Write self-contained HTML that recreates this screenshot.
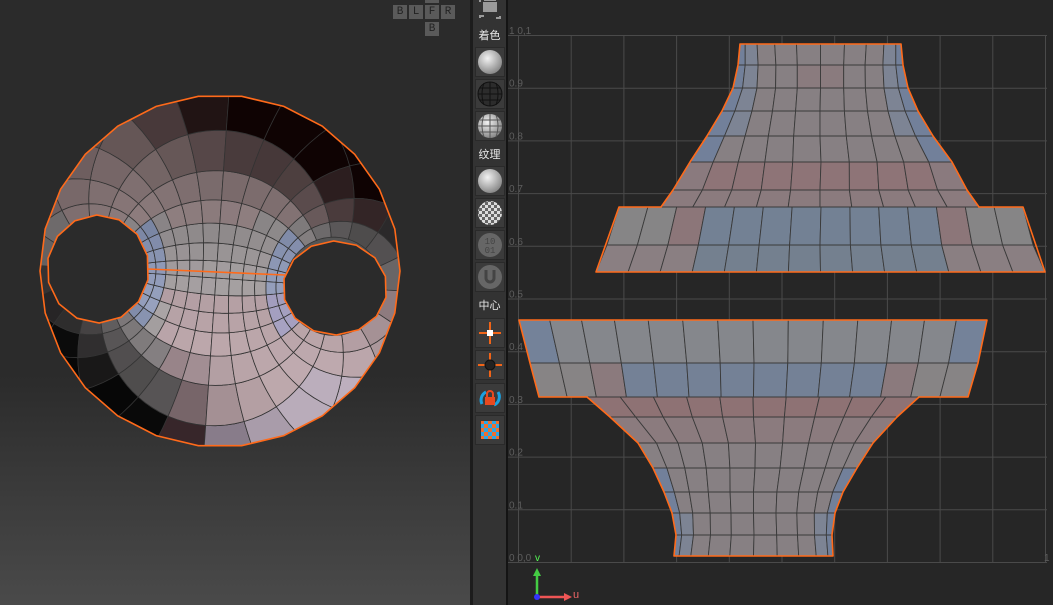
<!DOCTYPE html>
<html><head><meta charset="utf-8">
<style>
html,body{margin:0;padding:0;width:1053px;height:605px;overflow:hidden;background:#262626;font-family:"Liberation Sans","Noto Sans CJK SC",sans-serif}
#vp{position:absolute;left:0;top:0;width:470px;height:605px;background:linear-gradient(#2b2b2b 0,#2b2b2b 62%,#4a4a4a 100%)}
#sep{position:absolute;left:470px;top:0;width:3px;height:605px;background:#1c1c1c}
#tb{position:absolute;left:473px;top:0;width:33px;height:605px;background:#333;overflow:hidden}
#sep2{position:absolute;left:506px;top:0;width:2px;height:605px;background:#141414}
#uv{position:absolute;left:508px;top:0;width:545px;height:605px;background:#262626}
.btn{position:absolute;left:2px;width:30px;height:30px;background:#3b3b3b;border:1px solid #2a2a2a;box-sizing:border-box}
.lab{position:absolute;left:0;width:33px;text-align:center;color:#e8e8e8;font-size:11px;line-height:16px}
.nc{position:absolute;width:14px;height:14px;background:#5a5a5a;color:#222;font:11px "Liberation Mono",monospace;text-align:center;line-height:14px}
</style></head><body>
<div id="vp"></div>
<div class="nc" style="left:393px;top:5px">B</div>
<div class="nc" style="left:409px;top:5px">L</div>
<div class="nc" style="left:425px;top:5px">F</div>
<div class="nc" style="left:441px;top:5px">R</div>
<div class="nc" style="left:425px;top:0;height:3px"></div>
<div class="nc" style="left:425px;top:22px">B</div>
<div id="sep"></div>
<div id="tb">
 <svg style="position:absolute;left:2px;top:0" width="30" height="22"><path d="M5 2v-4M5 18v-2h4M25 16v2h-4M9 0h12" stroke="#9a9a9a" stroke-width="2" fill="none"/><rect x="8" y="2" width="14" height="10" fill="#9a9a9a"/></svg>
 <div class="lab" style="top:28px">着色</div>
 <div class="btn" style="top:47px"><svg width="28" height="28"><defs><radialGradient id="g1" cx="40%" cy="35%" r="65%"><stop offset="0" stop-color="#f2f2f2"/><stop offset="1" stop-color="#8a8a8a"/></radialGradient></defs><circle cx="14" cy="14" r="12" fill="url(#g1)"/></svg></div>
 <div class="btn" style="top:79px"><svg width="28" height="28"><circle cx="14" cy="14" r="12" fill="#2c2c2c" stroke="#111"/><path d="M2 14h24M4 8h20M4 20h20M14 2v24M8 3q-4 11 0 22M20 3q4 11 0 22" stroke="#111" fill="none"/></svg></div>
 <div class="btn" style="top:111px"><svg width="28" height="28"><circle cx="14" cy="14" r="12" fill="url(#g1)"/><path d="M2 14h24M4 8h20M4 20h20M14 2v24M8 3q-4 11 0 22M20 3q4 11 0 22" stroke="#555" fill="none"/></svg></div>
 <div class="lab" style="top:147px">纹理</div>
 <div class="btn" style="top:166px"><svg width="28" height="28"><circle cx="14" cy="14" r="12" fill="url(#g1)"/></svg></div>
 <div class="btn" style="top:198px"><svg width="28" height="28"><defs><pattern id="ck" width="6" height="6" patternUnits="userSpaceOnUse"><rect width="6" height="6" fill="#ddd"/><rect width="3" height="3" fill="#666"/><rect x="3" y="3" width="3" height="3" fill="#666"/></pattern></defs><circle cx="14" cy="14" r="12" fill="url(#ck)"/></svg></div>
 <div class="btn" style="top:230px"><svg width="28" height="28"><circle cx="14" cy="14" r="12" fill="#666"/><text x="14" y="13" font-size="9" text-anchor="middle" fill="#444" font-family="Liberation Mono">10</text><text x="14" y="22" font-size="9" text-anchor="middle" fill="#444" font-family="Liberation Mono">01</text></svg></div>
 <div class="btn" style="top:262px"><svg width="28" height="28"><circle cx="14" cy="14" r="12" fill="#666"/><path d="M10 7v8a4 4 0 0 0 8 0v-8" stroke="#444" stroke-width="3" fill="none"/></svg></div>
 <div class="lab" style="top:298px">中心</div>
 <div class="btn" style="top:318px"><svg width="28" height="28"><path d="M14 3v8M14 17v8M3 14h8M17 14h8" stroke="#f06418" stroke-width="2"/><rect x="11" y="11" width="6" height="6" fill="#fff"/></svg></div>
 <div class="btn" style="top:350px"><svg width="28" height="28"><path d="M14 2v7M14 19v7M2 14h7M19 14h7" stroke="#f06418" stroke-width="2"/><circle cx="14" cy="14" r="5" fill="#222" stroke="#111"/></svg></div>
 <div class="btn" style="top:383px"><svg width="28" height="28"><path d="M6 20a9 9 0 0 1 4 -12M22 8a9 9 0 0 1 -4 13" stroke="#1aa0e0" stroke-width="3" fill="none"/><rect x="9" y="13" width="10" height="8" fill="#e84a20"/><path d="M11 13v-3a3 3 0 0 1 6 0v3" stroke="#e84a20" stroke-width="2" fill="none"/></svg></div>
 <div class="btn" style="top:415px"><svg width="28" height="28"><defs><pattern id="ck2" width="8" height="8" patternUnits="userSpaceOnUse"><rect width="8" height="8" fill="#2aa8e8"/><rect width="4" height="4" fill="#f07030"/><rect x="4" y="4" width="4" height="4" fill="#f07030"/></pattern></defs><rect x="5" y="5" width="18" height="18" fill="url(#ck2)"/></svg></div>
</div>
<div id="sep2"></div>
<div id="uv"></div>
<svg id="S" width="1053" height="605" style="position:absolute;left:0;top:0"></svg>
<script>
var S=document.getElementById('S'),h='';
function P(pts){return pts.map(function(p){return p[0].toFixed(1)+','+p[1].toFixed(1)}).join(' ')}
h+='<g stroke="#4a4a4a" stroke-width="1">';
for(var k=0;k<=10;k++){var x=518.5+52.7*k;h+='<line x1="'+x+'" y1="35" x2="'+x+'" y2="562"/>';var y=35.5+52.7*k;h+='<line x1="508" y1="'+y+'" x2="1047" y2="'+y+'"/>';}
h+='</g>';
var labs=['1 0,1','0.9','0.8','0.7','0.6','0.5','0.4','0.3','0.2','0.1'];
for(var k=0;k<10;k++){h+='<text x="509" y="'+(34+52.7*k)+'" font-size="10" fill="#5e5e5e" font-family="Liberation Sans">'+labs[k]+'</text>';}
h+='<text x="509" y="561" font-size="10" fill="#5e5e5e">0 0,0</text><text x="535" y="561" font-size="10" fill="#5f5">v</text><text x="1044" y="561" font-size="10" fill="#5e5e5e">1</text>';
function grid(Y,L,R,n,comp,col){var s='',rows=Y.length-1;
 function fx(r,u){var w=comp(r);var g=0.5-0.5*Math.cos(Math.PI*u);var f=u*(1-w)+g*w;return L[r]+(R[r]-L[r])*f;}
 for(var r=0;r<rows;r++)for(var c=0;c<n;c++){var u0=c/n,u1=(c+1)/n;
  var pts=[[fx(r,u0),Y[r]],[fx(r,u1),Y[r]],[fx(r+1,u1),Y[r+1]],[fx(r+1,u0),Y[r+1]]];
  s+='<polygon points="'+P(pts)+'" fill="'+col(r,c,n)+'" stroke="#3a3a3a" stroke-width="0.9"/>';}
 return s;}
function outline(pts){return '<polygon points="'+P(pts)+'" fill="none" stroke="#ff6a1a" stroke-width="1.6" stroke-linejoin="round"/>';}
var TY=[44,65,88,111,136,162,190,207],TL=[740,738,733,722,707,690,673,661],TR=[901,903,908,918,933,952,967,979];
h+=grid(TY,TL,TR,10,function(r){return Math.max(0,0.9-r*0.15)},function(r,c,n){var e=Math.min(c,n-1-c);
 if(r==5)return e<1?'#8a7a7e':'#8e7477'; if(r==6)return '#8b7b7e';
 if(e==0&&r<5)return '#72809a'; if(e==1&&r<4)return '#7d8494'; if(r==1&&e>=4)return '#8a7b7e'; return '#878083';});
var WY=[207,245,272],WL=[619,607,596],WR=[1023,1033,1045];
h+=grid(WY,WL,WR,14,function(){return 0},function(r,c,n){var e=Math.min(c,n-1-c);
 if(r==0){if(e>=3)return '#738194';if(e==2)return '#8c7679';return '#868586';}
 if(e>=3)return '#74808f';return '#8a7f82';});
h+=outline([[740,44],[901,44]].concat(TR.map(function(x,i){return[x,TY[i]]}).slice(1)).concat([[1023,207],[1045,272],[596,272],[619,207]]).concat(TL.map(function(x,i){return[x,TY[i]]}).reverse().slice(0,-1)));
var BY=[320,363,397],BL=[519,530,539],BR=[987,978,968];
h+=grid(BY,BL,BR,14,function(){return 0.1},function(r,c,n){var e=Math.min(c,n-1-c);
 if(r==0){if(e==0)return '#748299';return '#85878c';}
 if(e>=3)return '#748196';if(e==2)return '#8b7a7d';return '#878485';});
var NY=[397,417,443,468,492,513,535,556],NL=[587,610,638,653,664,672,676,674],NR=[919,897,873,857,843,835,832,833];
h+=grid(NY,NL,NR,10,function(r){return Math.min(0.9,r*0.14)},function(r,c,n){var e=Math.min(c,n-1-c);
 if(r==0)return '#8e7274'; if(r==1)return '#8b7b7e';
 if(e==0&&r>=3)return '#72809a'; if(e==1&&r>=5)return '#7d8494'; return '#878083';});
h+=outline([[519,320],[987,320],[978,363],[968,397]].concat(NR.map(function(x,i){return[x,NY[i]]})).concat(NL.map(function(x,i){return[x,NY[i]]}).reverse()).concat([[539,397],[530,363]]));
h+='<line x1="537" y1="597" x2="537" y2="574" stroke="#4c4" stroke-width="2.5"/><polygon points="533,576 541,576 537,568" fill="#4c4"/>';
h+='<line x1="537" y1="597" x2="566" y2="597" stroke="#e55" stroke-width="2.5"/><polygon points="564,593 564,601 572,597" fill="#e55"/><circle cx="537" cy="597" r="3" fill="#33f"/>';
h+='<text x="573" y="598" font-size="11" fill="#e66">u</text>';
var cx=216,cy=278,a=107.4,s0=1.524,rot=0.07;
function bp(s,t){var d=Math.cosh(s)-Math.cos(t),x,y;
 if(Math.abs(d)<1e-9){x=0;y=(t<1?400:-400);}else{x=a*Math.sinh(s)/d;y=a*Math.sin(t)/d;}
 var m=Math.sqrt(x*x+y*y);if(m>400){x*=400/m;y*=400/m;}
 var xr=x*Math.cos(rot)-y*Math.sin(rot),yr=x*Math.sin(rot)+y*Math.cos(rot);return[cx+xr,cy+yr];}
var ol=[];for(var i=0;i<26;i++){var an=i/26*2*Math.PI;ol.push([220+180*Math.cos(an),271+176*Math.sin(an)]);}
h+='<defs><clipPath id="cs"><polygon points="'+P(ol)+'"/></clipPath></defs><g clip-path="url(#cs)"><polygon points="'+P(ol)+'" fill="#555"/>';
var NSg=12,NT=20;
for(var i=0;i<NSg;i++)for(var j=0;j<NT;j++){
 var sa=-s0+i*2*s0/NSg,sb=-s0+(i+1)*2*s0/NSg,ta=j*2*Math.PI/NT,tb=(j+1)*2*Math.PI/NT,pts=[],q;
 for(q=0;q<=4;q++)pts.push(bp(sa+(sb-sa)*q/4,ta));
 for(q=0;q<=4;q++)pts.push(bp(sb,ta+(tb-ta)*q/4));
 for(q=4;q>=0;q--)pts.push(bp(sa+(sb-sa)*q/4,tb));
 for(q=4;q>=0;q--)pts.push(bp(sa,ta+(tb-ta)*q/4));
 var c=bp((sa+sb)/2,(ta+tb)/2),nx=(c[0]-220)/180,ny=(c[1]-271)/176,r=Math.sqrt(nx*nx+ny*ny),an=Math.atan2(ny,nx);
 var dd=Math.pow(Math.cos(an+Math.PI/4),2);
 var bl=(nx<0&&ny>0)?1.5:1.0;
 var b=0.7+0.14*ny-Math.max(0,r-0.45)*1.05*dd*bl-0.26*Math.max(0,-ny);
 b=Math.max(0.03,Math.min(0.82,b));
 var R=b*232,G=b*224,B=b*226;
 if(nx>-0.3&&ny>0.1){R+=12;G-=3;}
 if(ny<-0.3){R+=8;G-=4;B-=4;}
 var sm=Math.abs((sa+sb)/2);
 if(sm>1.0&&Math.abs((ta+tb)/2-Math.PI)<1.2){R-=18;G-=2;B+=26;}
 if(r>0.85&&ny>0.55&&nx>-0.2){R-=8;B+=10;}
 h+='<polygon points="'+P(pts)+'" fill="rgb('+[R,G,B].map(function(v){return Math.max(0,Math.min(255,Math.round(v)))}).join(',')+')" stroke="#333" stroke-width="0.8"/>';}
h+='</g>';
h+='<polygon points="'+P(ol)+'" fill="none" stroke="#ff6a1a" stroke-width="1.6"/>';
function hole(cx0,cy0,rx,ry){var p=[];for(var i=0;i<14;i++){var an=i/14*2*Math.PI+0.2;p.push([cx0+rx*Math.cos(an),cy0+ry*Math.sin(an)]);}
 return '<polygon points="'+P(p)+'" fill="#2b2b2b" stroke="#ff6a1a" stroke-width="1.6"/>';}
h+='<line x1="148" y1="269" x2="285" y2="275" stroke="#ff6a1a" stroke-width="1.6"/>';
h+=hole(98,269,51,54)+hole(335,288,52,47);
S.innerHTML=h;
</script>
</body></html>
